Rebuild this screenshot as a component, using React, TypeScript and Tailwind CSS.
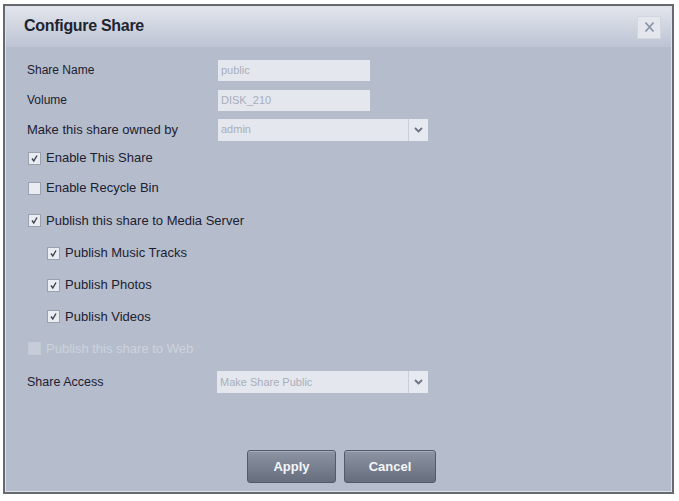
import React from "react";

const font = { fontFamily: '"Liberation Sans", Arial, sans-serif' };

function Check({ checked, disabled }: { checked?: boolean; disabled?: boolean }) {
  return (
    <div
      className={
        "w-[13px] h-[13px] border flex items-center justify-center shrink-0 " +
        (disabled ? "border-[#c3c9d5] bg-[#c6ccd8]" : "border-[#9aa1ae] bg-[#e9ecf1]")
      }
    >
      {checked && (
        <svg width="9" height="9" viewBox="0 0 9 9">
          <path d="M2 4.5 L3.8 7 L7 1.5" fill="none" stroke="#3b4150" strokeWidth="1.4" />
        </svg>
      )}
    </div>
  );
}

function Arrow() {
  return (
    <div className="w-[20px] h-full border-l border-[#c9ced8] flex items-center justify-center bg-[#e6e9ef]">
      <svg width="9" height="6" viewBox="0 0 9 6">
        <path d="M1 1 L4.5 4.5 L8 1" fill="none" stroke="#6c7384" strokeWidth="1.8" />
      </svg>
    </div>
  );
}

export default function App() {
  return (
    <div className="w-[679px] h-[501px] bg-white pt-[4px] pl-[3px]" style={font}>
      <div className="w-[671px] h-[490px] border-2 border-[#66696f] bg-[#b5bdcc] flex flex-col">
        <div className="flex-1 border border-[#dde1e8] flex flex-col">
          {/* Title bar */}
          <div className="h-[40px] shrink-0 bg-gradient-to-b from-[#e2e5ec] to-[#bcc3d3] flex items-center justify-between pl-[18px] pr-[10px]">
            <div className="text-[16px] font-bold text-[#1f2430] tracking-[-0.3px] mt-[-2px]">Configure Share</div>
            <div className="w-[24px] h-[23px] bg-[#e3e6ed] border border-[#d2d6de] flex items-center justify-center">
              <svg width="11" height="12" viewBox="0 0 11 12">
                <path d="M1.5 1.5 L9.5 10.5 M9.5 1.5 L1.5 10.5" stroke="#8a93a7" strokeWidth="1.8" />
              </svg>
            </div>
          </div>

          {/* Body */}
          <div className="flex flex-col pl-[21px] pt-[8px] text-[13px] text-[#1c2030]">
            <div className="h-[30px] flex items-center">
              <div className="w-[191px] text-[12px]">Share Name</div>
              <div className="w-[152px] h-[21px] bg-[#e4e7ed] flex items-center pl-[3px] text-[#a8aebb] text-[11px]">public</div>
            </div>
            <div className="h-[30px] flex items-center">
              <div className="w-[191px] text-[12px]">Volume</div>
              <div className="w-[152px] h-[21px] bg-[#e4e7ed] flex items-center pl-[3px] text-[#a8aebb] text-[11px]">DISK_210</div>
            </div>
            <div className="h-[29px] flex items-center">
              <div className="w-[191px]">Make this share owned by</div>
              <div className="w-[210px] h-[22px] bg-[#e4e7ed] flex items-center">
                <div className="flex-1 pl-[3px] text-[#a8aebb] text-[11px]">admin</div>
                <Arrow />
              </div>
            </div>
            <div className="h-[28px] flex items-center gap-[5px] pl-[1px]">
              <Check checked />
              <span>Enable This Share</span>
            </div>
            <div className="h-[32px] flex items-center gap-[5px] pl-[1px]">
              <Check />
              <span>Enable Recycle Bin</span>
            </div>
            <div className="h-[33px] flex items-center gap-[5px] pl-[1px]">
              <Check checked />
              <span>Publish this share to Media Server</span>
            </div>
            <div className="h-[32px] flex items-center gap-[5px] pl-[20px]">
              <Check checked />
              <span>Publish Music Tracks</span>
            </div>
            <div className="h-[32px] flex items-center gap-[5px] pl-[20px]">
              <Check checked />
              <span>Publish Photos</span>
            </div>
            <div className="h-[31px] flex items-center gap-[5px] pl-[20px]">
              <Check checked />
              <span>Publish Videos</span>
            </div>
            <div className="h-[33px] flex items-center gap-[5px] pl-[1px]">
              <Check disabled />
              <span className="text-[#cdd2dc]">Publish this share to Web</span>
            </div>
            <div className="h-[34px] flex items-center">
              <div className="w-[190px] text-[12.5px]">Share Access</div>
              <div className="w-[211px] h-[22px] bg-[#e4e7ed] flex items-center">
                <div className="flex-1 pl-[3px] text-[#a8aebb] text-[11px]">Make Share Public</div>
                <Arrow />
              </div>
            </div>
          </div>

          {/* Buttons */}
          <div className="flex justify-center gap-[8px] mt-[51px] pl-[6px]">
            <button className="w-[89px] h-[33px] rounded-[3px] border border-[#545b68] bg-gradient-to-b from-[#8d94a4] to-[#666e7e] text-[#f4f5f8] font-bold text-[13px] shadow-[inset_0_1px_0_#a4abba]">
              Apply
            </button>
            <button className="w-[92px] h-[33px] rounded-[3px] border border-[#545b68] bg-gradient-to-b from-[#8d94a4] to-[#666e7e] text-[#f4f5f8] font-bold text-[13px] shadow-[inset_0_1px_0_#a4abba]">
              Cancel
            </button>
          </div>
        </div>
      </div>
    </div>
  );
}
